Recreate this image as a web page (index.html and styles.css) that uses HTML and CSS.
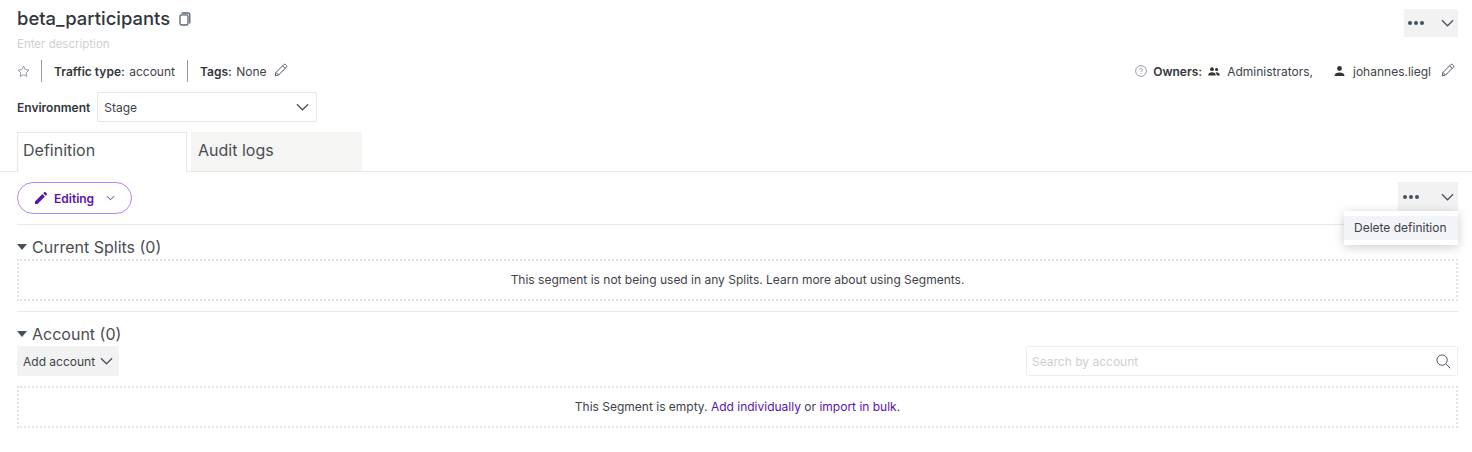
FILE: index.html
```html
<!DOCTYPE html>
<html lang="en">
<head>
<meta charset="utf-8">
<title>beta_participants</title>
<link rel="stylesheet" href="styles.css">
</head>
<body>
<header class="head">
  <div class="title-row">
    <div class="title-wrap">
      <h1 class="title">beta_participants</h1>
      <svg class="copy" viewBox="0 0 12 14"><path d="M2.6 1h6.2A2 2 0 0 1 10.8 3v8.6"/><rect x="1" y="2.8" width="8" height="10.2" rx="1.6"/></svg>
    </div>
    <div class="actions">
      <span class="dots"><i></i><i></i><i></i></span>
      <svg class="chev" viewBox="0 0 14 8"><path d="M1 1l6 6 6-6"/></svg>
    </div>
  </div>
  <div class="desc">Enter description</div>
  <div class="meta">
    <div class="meta-left">
      <svg class="star" viewBox="0 0 14 14"><path d="M7 1.2l1.8 3.7 4 .6-2.9 2.8.7 4L7 10.4l-3.6 1.9.7-4L1.2 5.5l4-.6z"/></svg>
      <span class="sep"></span>
      <span class="meta-item"><b>Traffic type:</b> account</span>
      <span class="sep"></span>
      <span class="meta-item"><b>Tags:</b> None</span>
      <svg class="pencil" viewBox="0 0 14 14"><path d="M1.2 12.8l.8-3.4L9.8 1.6a1.3 1.3 0 0 1 1.8 0l.8.8a1.3 1.3 0 0 1 0 1.8L4.6 12z"/><path d="M8.6 2.8l2.6 2.6M2 9.4L4.6 12"/></svg>
    </div>
    <div class="meta-right">
      <svg class="help" viewBox="0 0 12 12"><circle cx="6" cy="6" r="5.4"/><path d="M4.6 4.6a1.4 1.4 0 1 1 2.2 1.2c-.5.3-.8.6-.8 1.2M6 8.2v.8"/></svg>
      <b>Owners:</b>
      <svg class="group" viewBox="0 0 12 9"><circle cx="4" cy="2.2" r="1.9"/><circle cx="8.6" cy="2.5" r="1.6"/><path d="M0.2 8.6c0-2.2 1.6-3.3 3.8-3.3s3.8 1.1 3.8 3.3zM8.8 8.6c0-1.4-.4-2.4-1.3-3.2 2.3-.3 4.3.8 4.3 3.2z"/></svg>
      <span class="owner-a">Administrators,</span>
      <svg class="person" viewBox="0 0 11 10"><circle cx="5.5" cy="2.5" r="2.4"/><path d="M.5 10c0-2.6 2.2-3.6 5-3.6s5 1 5 3.6z"/></svg>
      <span class="owner-b">johannes.liegl</span>
      <svg class="pencil" viewBox="0 0 14 14"><path d="M1.2 12.8l.8-3.4L9.8 1.6a1.3 1.3 0 0 1 1.8 0l.8.8a1.3 1.3 0 0 1 0 1.8L4.6 12z"/><path d="M8.6 2.8l2.6 2.6M2 9.4L4.6 12"/></svg>
    </div>
  </div>
  <div class="env">
    <b>Environment</b>
    <div class="select"><span>Stage</span><svg class="chev" viewBox="0 0 14 8"><path d="M1 1l6 6 6-6"/></svg></div>
  </div>
</header>
<nav class="tabs">
  <div class="tab tab-on">Definition</div>
  <div class="tab tab-off">Audit logs</div>
</nav>
<main class="body">
  <div class="toolbar">
    <button class="editing">
      <svg class="edit-ico" viewBox="0 0 12 12"><path d="M0 12V9.5L7.4 2.1l2.5 2.5L2.5 12zM8.2 1.3L9.2.3a1 1 0 0 1 1.4 0l1.1 1.1a1 1 0 0 1 0 1.4l-1 1z"/></svg>
      <span>Editing</span>
      <svg class="edit-chev" viewBox="0 0 10 6"><path d="M1 1l4 4 4-4"/></svg>
    </button>
    <div class="actions actions-wide">
      <span class="dots"><i></i><i></i><i></i></span>
      <svg class="chev" viewBox="0 0 14 8"><path d="M1 1l6 6 6-6"/></svg>
    </div>
    <div class="menu"><div class="menu-item">Delete definition</div></div>
  </div>
  <section class="section">
    <h2 class="sec-title"><span class="caret"></span>Current Splits (0)</h2>
    <div class="empty">This segment is not being used in any Splits. Learn more about using Segments.</div>
  </section>
  <section class="section section-last">
    <h2 class="sec-title"><span class="caret"></span>Account (0)</h2>
    <div class="controls">
      <button class="add">Add account<svg class="chev" viewBox="0 0 14 8"><path d="M1 1l6 6 6-6"/></svg></button>
      <div class="search"><span>Search by account</span><svg class="mag" viewBox="0 0 16 16"><circle cx="6.5" cy="6.5" r="5.5"/><path d="M10.6 10.6L15.2 15.2"/></svg></div>
    </div>
    <div class="empty empty-b">This Segment is empty. <a href="#">Add individually</a> or <a href="#">import in bulk</a>.</div>
  </section>
</main>
</body>
</html>
```
FILE: styles.css
```css
* { box-sizing: border-box; }
html, body { margin: 0; padding: 0; background: #fff; }
body {
  width: 1472px;
  height: 452px;
  overflow: hidden;
  font-family: Inter, "Liberation Sans", sans-serif;
  font-size: 12px;
  color: #3f4247;
}
b { font-weight: 600; color: #33363b; margin-right: 1px; }
svg { display: block; flex: none; }
.head { padding: 9px 14px 0 17px; }
.title-row { display: flex; justify-content: space-between; align-items: flex-start; height: 28px; }
.title-wrap { display: flex; align-items: center; gap: 9px; height: 20px; }
.title { margin: -2px 0 0; font-size: 18.45px; line-height: 20px; font-weight: 500; color: #33363b; }
.copy { width: 12px; height: 14px; fill: none; stroke: #5b6470; stroke-width: 1.3; }
.actions { display: flex; align-items: center; justify-content: space-between; width: 54px; height: 28px; padding: 0 4px; background: #f2f2f2; }
.actions-wide { width: 60px; height: 30px; padding: 0 4px 0 5px; }
.dots { display: flex; gap: 2px; }
.dots i { width: 4px; height: 4px; border-radius: 50%; background: #465160; }
.chev { width: 13px; height: 8px; fill: none; stroke: #465160; stroke-width: 1.3; }
.desc { font-size: 11.5px; line-height: 14px; color: #d0d0d0; }
.meta { display: flex; justify-content: space-between; align-items: center; height: 22px; margin-top: 9px; }
.meta-left, .meta-right { display: flex; align-items: center; }
.star { width: 13px; height: 13px; fill: none; stroke: #8b949e; stroke-width: 1; margin-right: 11px; }
.sep { width: 1px; height: 22px; background: #9a9a9a; }
.meta-item { margin: 0 12px; }
.meta-left .meta-item:last-of-type { margin-right: 7px; }
.pencil { width: 14px; height: 14px; margin-bottom: 2px; fill: none; stroke: #4f5762; stroke-width: 1; }
.meta-right { padding-right: 3px; }
.help { width: 12px; height: 12px; fill: none; stroke: #7e8690; stroke-width: .8; margin-right: 6px; }
.group { width: 12px; height: 9px; fill: #333; margin: 0 7px 0 5px; }
.person { width: 11px; height: 10px; fill: #333; margin: 0 8px 0 21px; }
.owner-b { margin-right: 10px; }
.env { display: flex; align-items: center; gap: 6px; margin-top: 10px; height: 30px; }
.select { display: flex; align-items: center; justify-content: space-between; width: 220px; height: 30px; padding: 0 7px 0 6px; border: 1px solid #e6e6e6; border-radius: 2px; }
.tabs { display: flex; gap: 4px; height: 40px; margin-top: 10px; padding-left: 17px; border-bottom: 1px solid #e8e8e8; font-size: 16px; color: #4a4d52; }
.tab { width: 170px; height: 40px; line-height: 35px; padding-left: 5px; }
.tab-on { background: #fff; border: 1px solid #e8e8e8; border-bottom: 0; }
.tab-off { width: 171px; height: 39px; background: #f5f5f3; padding-left: 7px; line-height: 37px; }
.body { padding: 0 14px 0 17px; }
.toolbar { position: relative; display: flex; justify-content: space-between; align-items: flex-start; height: 53px; padding-top: 10px; border-bottom: 1px solid #e8e8e8; }
.editing { display: flex; align-items: center; width: 115px; height: 32px; padding: 0 0 0 17px; border: 1px solid #b388f2; border-radius: 16px; background: #fff; font: 600 12px Inter, sans-serif; color: #5a13ad; }
.edit-ico { width: 12px; height: 12px; fill: #5a13ad; margin-right: 7px; }
.edit-chev { width: 9px; height: 6px; fill: none; stroke: #5a13ad; stroke-width: 1; margin-left: 12px; }
.menu { position: absolute; top: 39px; right: 0; width: 114px; height: 34px; padding: 5px 0; background: #fff; box-shadow: 0 2px 10px rgba(0,0,0,.2); z-index: 2; }
.menu-item { height: 24px; padding-left: 10px; line-height: 24px; background: #f2f4f8; }
.section { height: 87px; padding-top: 12px; border-bottom: 1px solid #e8e8e8; }
.section-last { border-bottom: 0; height: auto; padding-top: 12px; }
.sec-title { display: flex; align-items: center; margin: 0; font-size: 16px; line-height: 20px; font-weight: 400; color: #4a4d52; }
.caret { width: 0; height: 0; margin-right: 5px; border: 5px solid transparent; border-top: 6px solid #465160; border-bottom: 0; }
.empty { height: 42px; margin-top: 2px; border: 2px dotted #e3e3e3; text-align: center; line-height: 38px; }
.empty-b { margin-top: 10px; }
.empty a { color: #5a13ad; text-decoration: none; }
.controls { display: flex; justify-content: space-between; margin-top: 2px; }
.add { display: flex; align-items: center; gap: 5px; width: 102px; height: 30px; padding: 0 0 0 6px; border: 0; background: #f2f2f2; font: 400 12px Inter, sans-serif; color: #3f4247; white-space: nowrap; }
.search { display: flex; align-items: center; justify-content: space-between; width: 432px; height: 30px; padding: 0 6px 0 5px; border: 1px solid #eeeeee; border-radius: 2px; color: #cfcfcf; }
.mag { width: 15px; height: 15px; fill: none; stroke: #465160; stroke-width: 1; }
```
